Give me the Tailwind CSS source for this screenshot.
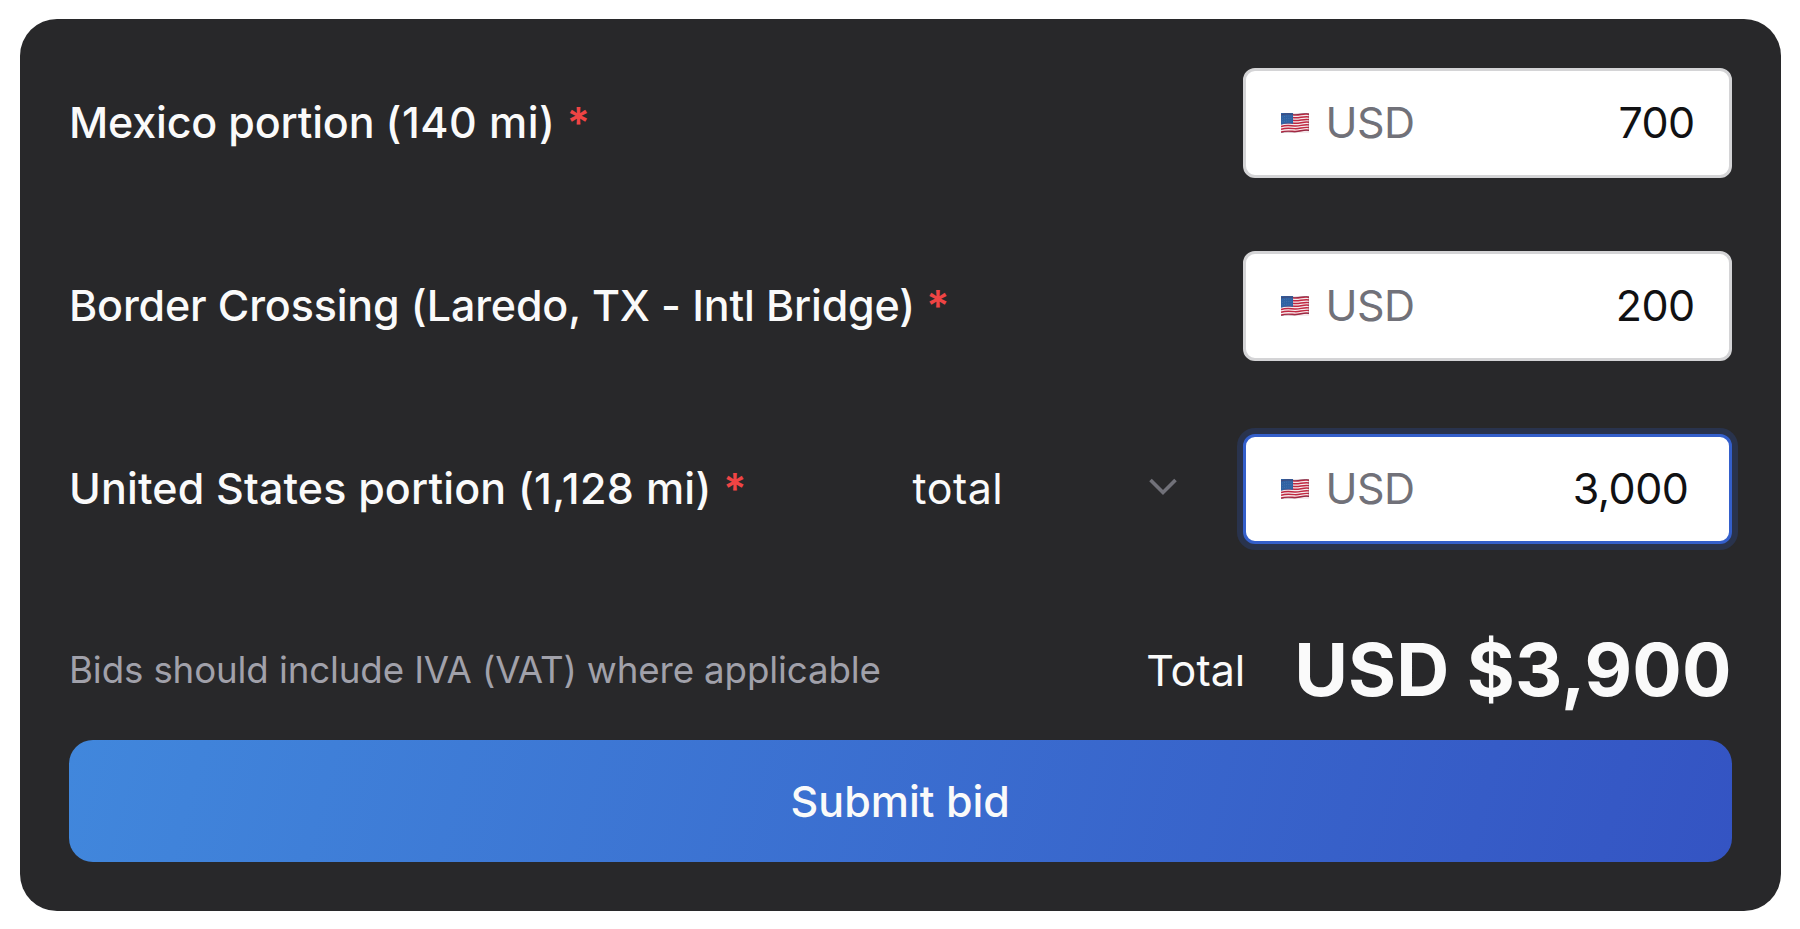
<!DOCTYPE html>
<html lang="en">
<head>
<meta charset="utf-8">
<title>Submit bid</title>
<script src="https://cdn.jsdelivr.net/npm/@tailwindcss/browser@4"></script>
</head>
<body class="bg-white font-['Inter',sans-serif] text-[43px] leading-[60px] text-[#fafafa]">
<svg class="hidden">
  <symbol id="flag" viewBox="0 0 28 22" preserveAspectRatio="none">
    <clipPath id="wave"><path d="M0 2.200C5 .2 9 1.200 13.500 1.600S23-.6 28 1V19.500C23 18 18 20 13.500 21S5 20 0 21.800Z"/></clipPath>
    <g clip-path="url(#wave)">
      <path fill="#f4eaec" d="M0 0h28v22H0z"/>
      <g fill="none" stroke="#c02841" stroke-width="1.600">
        <path d="M0 2.600C5 .9 9 1.500 13.500 2.200S23 .2 28 1.500"/>
        <path d="M0 5.600C5 3.900 9 4.500 13.500 5.200S23 3.200 28 4.400"/>
        <path d="M0 8.600C5 6.900 9 7.500 13.500 8.200S23 6.200 28 7.300"/>
        <path d="M0 11.700C5 9.900 9 10.500 13.500 11.200S23 9.100 28 10.200"/>
        <path d="M0 14.800C5 12.900 9 13.500 13.500 14.200S23 12 28 13.100"/>
        <path d="M0 17.900C5 15.900 9 16.500 13.500 17.200S23 14.900 28 16"/>
        <path d="M0 21C5 19.200 9 20 13.500 20.300S23 17.800 28 18.900"/>
      </g>
      <path fill="#2f62a3" d="M0 0h12v12C8 11.200 4 11.400 0 12.800Z"/>
      <path fill="none" stroke="#6488b8" stroke-width=".6" stroke-dasharray=".8 1.400" d="M1 4.500Q6 2.800 11.500 3.600M1 7.200Q6 5.500 11.500 6.300M1 9.900Q6 8.200 11.500 9"/>
      <path fill="none" stroke="#5b2a45" stroke-opacity=".5" stroke-width="1" d="M0 21.700C5 19.900 9 20.900 13.500 20.900S23 17.900 28 19.400M28 1V19.500M0 2.200C5 .2 9 1.200 13.500 1.600S23-.6 28 1"/>
    </g>
  </symbol>
</svg>
<main class="ml-5 mt-[19px] flex h-[892px] w-[1760.5px] flex-col rounded-[37px] bg-[#28282a] px-[49px] pt-[49px]">
  <div class="flex flex-col gap-[73px]">
    <div class="flex h-[110px] items-center justify-between">
      <label class="pb-[3px] font-medium whitespace-pre"><span class="tracking-[-0.18px]">Mexico portion </span><span class="tracking-[0.45px]">(140 mi)</span> <span class="font-semibold text-[#ef4444]">*</span></label>
      <div class="flex h-full w-[489px] items-center rounded-xl border-3 border-[#d4d4d6] bg-white px-[34px] tracking-[-0.6px] text-[#717179]">
        <svg class="mr-[17px] ml-px h-5 w-7"><use href="#flag"/></svg>
        <span class="pb-[3px]">USD</span>
        <span class="ml-auto pb-[3px] text-[#111113]">700</span>
      </div>
    </div>
    <div class="flex h-[110px] items-center justify-between">
      <label class="pb-[3px] font-medium tracking-[-0.16px] whitespace-pre">Border Crossing (Laredo, TX - Intl Bridge) <span class="font-semibold text-[#ef4444]">*</span></label>
      <div class="flex h-full w-[489px] items-center rounded-xl border-3 border-[#d4d4d6] bg-white px-[34px] tracking-[-0.6px] text-[#717179]">
        <svg class="mr-[17px] ml-px h-5 w-7"><use href="#flag"/></svg>
        <span class="pb-[3px]">USD</span>
        <span class="ml-auto pb-[3px] text-[#111113]">200</span>
      </div>
    </div>
    <div class="flex h-[110px] items-center">
      <label class="pb-[2px] font-medium whitespace-pre"><span class="tracking-[0.14px]">United States portion </span><span class="tracking-[0.3px]">(1,128 mi)</span> <span class="font-semibold text-[#ef4444]">*</span></label>
      <div class="mr-[66px] ml-auto flex w-[264px] items-center justify-between">
        <span class="pb-[3px] tracking-[0.5px]">total</span>
        <svg class="mb-[4px] h-[18px] w-7" viewBox="0 0 28 18" fill="none" stroke="#717179" stroke-width="3.600"><path d="M1.500 2 14 14.500 26.500 2"/></svg>
      </div>
      <div class="flex h-full w-[489px] items-center rounded-xl border-3 border-[#345fcb] bg-white pr-[40px] pl-[34px] tracking-[-0.5px] text-[#717179] shadow-[0_0_0_6px_#29334d]">
        <svg class="mr-[17px] ml-px h-5 w-7"><use href="#flag"/></svg>
        <span class="pb-[2px]">USD</span>
        <span class="ml-auto pb-[2px] text-[#111113]">3,000</span>
      </div>
    </div>
  </div>
  <div class="mt-[81px] flex h-[90px] items-center">
    <p class="text-[36.7px] tracking-[-0.13px] text-[#a1a1aa]">Bids should include IVA (VAT) where applicable</p>
    <span class="mr-[49px] ml-auto">Total</span>
    <strong class="text-[73.4px] font-bold tracking-[0.1px]">USD $3,900</strong>
  </div>
  <button class="mt-[25px] h-[122px] rounded-3xl bg-linear-[105deg,#4187dc,#3454c3] font-medium">Submit bid</button>
</main>
</body>
</html>
